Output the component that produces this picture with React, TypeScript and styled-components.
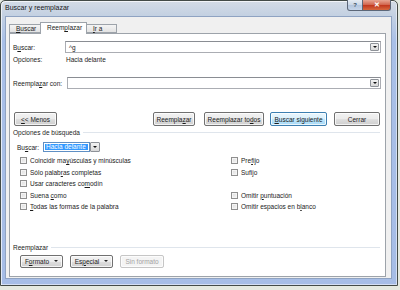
import React from "react";
import styled, { createGlobalStyle, css } from "styled-components";

const Global = createGlobalStyle`
  html, body { margin: 0; padding: 0; background: #e4e9e0; }
  body { font-family: "Liberation Sans", Arial, sans-serif; font-size: 6.5px; color: #1b1b1b; }
  * { box-sizing: border-box; }
  u { text-decoration: underline; text-underline-offset: 1px; }
`;

const Window = styled.div`
  width: 398px;
  height: 286px;
  border: 1px solid #434b47;
  border-radius: 5px 5px 0 0;
  background: linear-gradient(180deg, #d4dce6 0px, #c4d1e2 14px, #a9c0e8 40px, #a6bde6 100%);
  box-shadow: inset 1px 1px 0 rgba(255, 255, 255, 0.7), inset -1px -1px 0 rgba(255, 255, 255, 0.5);
  display: flex;
  flex-direction: column;
`;

const TitleBar = styled.div`
  height: 15px;
  display: flex;
  align-items: flex-start;
  justify-content: space-between;
  padding-left: 4px;
`;

const Title = styled.span`
  font-size: 7px;
  line-height: 13px;
  color: #1a1a1a;
`;

const Controls = styled.div`
  display: flex;
  margin-right: 6px;
  margin-top: -1px;
`;

const CtrlBtn = styled.div<{ $close?: boolean }>`
  height: 11px;
  width: ${(p) => (p.$close ? 28 : 16)}px;
  border: 1px solid #5c6778;
  border-top: none;
  ${(p) =>
    p.$close
      ? css`
          border-radius: 0 0 3px 0;
          background: linear-gradient(180deg, #e8a593 0%, #d0624a 50%, #c2391f 55%, #d6683f 100%);
          border-left: none;
          color: #fff;
        `
      : css`
          border-radius: 0 0 0 3px;
          background: linear-gradient(180deg, #e6ecf3 0%, #c9d6e6 50%, #b4c6de 55%, #c7d6ea 100%);
          color: #3b4a60;
        `}
  display: flex;
  align-items: center;
  justify-content: center;
  font-size: 7px;
  font-weight: bold;
`;

const Client = styled.div`
  flex: 1;
  margin: 0 5px 6px 4px;
  background: #f0f0f0;
  border: 1px solid #8fa3c2;
  padding: 5px 5px 1px 3px;
  display: flex;
  flex-direction: column;
`;

const Tabs = styled.div`
  display: flex;
  align-items: flex-end;
  height: 11px;
  position: relative;
  z-index: 1;
`;

const Tab = styled.div<{ $active?: boolean; $w: number }>`
  width: ${(p) => p.$w}px;
  height: ${(p) => (p.$active ? 12 : 9)}px;
  margin-bottom: ${(p) => (p.$active ? -1 : 0)}px;
  border: 1px solid #9da3aa;
  border-bottom: ${(p) => (p.$active ? "none" : "1px solid #9da3aa")};
  border-left: ${(p) => (p.$active ? "1px solid #9da3aa" : "1px solid #9da3aa")};
  background: ${(p) => (p.$active ? "#ffffff" : "linear-gradient(180deg, #f4f4f4, #e3e3e3)")};
  padding-left: ${(p) => (p.$active ? 6 : 6)}px;
  line-height: ${(p) => (p.$active ? 10 : 8)}px;
  & + & { margin-left: -1px; }
`;

const Panel = styled.div`
  flex: 1;
  background: #fff;
  border: 1px solid #9da3aa;
  padding: 7px 2px 0 3px;
  display: flex;
  flex-direction: column;
`;

const FieldRow = styled.div<{ $mt?: number }>`
  display: flex;
  align-items: center;
  margin-top: ${(p) => p.$mt ?? 0}px;
`;

const Label = styled.span<{ $w: number }>`
  width: ${(p) => p.$w}px;
  flex-shrink: 0;
`;

const Combo = styled.div<{ $h: number }>`
  flex: 1;
  height: ${(p) => p.$h}px;
  border: 1px solid #abadb3;
  border-top-color: #8a8d93;
  display: flex;
  align-items: center;
  justify-content: space-between;
  padding: 0 1px 0 3px;
  margin-right: 2px;
`;

const ArrowBtn = styled.div<{ $w?: number; $h?: number }>`
  width: ${(p) => p.$w ?? 9}px;
  height: ${(p) => p.$h ?? 8}px;
  border: 1px solid #8e9298;
  border-radius: 1px;
  background: linear-gradient(180deg, #f3f3f3, #d8d8d8);
  display: flex;
  align-items: center;
  justify-content: center;
  &::after {
    content: "";
    border-left: 2px solid transparent;
    border-right: 2px solid transparent;
    border-top: 2px solid #111;
  }
`;

const ButtonRow = styled.div<{ $mt: number }>`
  display: flex;
  align-items: center;
  margin-top: ${(p) => p.$mt}px;
  gap: 6px;
`;

const Button = styled.div<{ $w: number; $h?: number; $default?: boolean; $disabled?: boolean; $ml?: number }>`
  width: ${(p) => p.$w}px;
  height: ${(p) => p.$h ?? 14}px;
  margin-left: ${(p) => p.$ml ?? 0}px;
  border: 1px solid ${(p) => (p.$default ? "#3c7fb1" : p.$disabled ? "#c6c6c6" : "#707070")};
  border-radius: 2px;
  background: ${(p) =>
    p.$disabled
      ? "#f4f4f4"
      : p.$default
      ? "linear-gradient(180deg, #eaf6fd 0%, #d9f0fc 50%, #bee6fd 55%, #a7d9f5 100%)"
      : "linear-gradient(180deg, #f2f2f2 0%, #ebebeb 50%, #dddddd 55%, #cfcfcf 100%)"};
  box-shadow: inset 0 0 0 1px rgba(255, 255, 255, 0.75);
  color: ${(p) => (p.$disabled ? "#a3a3a3" : "#1b1b1b")};
  display: flex;
  align-items: center;
  justify-content: center;
  gap: 5px;
  white-space: nowrap;
`;

const Caret = styled.span`
  border-left: 2px solid transparent;
  border-right: 2px solid transparent;
  border-top: 2px solid #222;
`;

const Spacer = styled.div`
  flex: 1;
`;

const GroupHeader = styled.div<{ $mt: number }>`
  display: flex;
  align-items: center;
  gap: 3px;
  margin-top: ${(p) => p.$mt}px;
  margin-right: 3px;
  height: 8px;
  white-space: nowrap;
  &::after {
    content: "";
    flex: 1;
    height: 1px;
    background: #dfe5ec;
  }
`;

const SearchRow = styled.div`
  display: flex;
  align-items: center;
  margin: 6px 0 0 4px;
  height: 10px;
`;

const Select = styled.div`
  width: 47px;
  height: 10px;
  border: 1px solid #5f8fc4;
  padding: 1px;
  display: flex;
`;

const Selected = styled.span`
  flex: 1;
  background: #3399ff;
  color: #fff;
  line-height: 6px;
  padding-left: 1px;
`;

const Options = styled.div`
  display: grid;
  grid-template-columns: 211px 1fr;
  grid-auto-rows: 11.5px;
  margin: 3px 0 0 7px;
`;

const Check = styled.label<{ $row: number; $col: number }>`
  grid-row: ${(p) => p.$row};
  grid-column: ${(p) => p.$col};
  display: flex;
  align-items: center;
  gap: 3px;
  white-space: nowrap;
`;

const Box = styled.span`
  width: 7px;
  height: 7px;
  border: 1px solid #8f8f8f;
  background: linear-gradient(135deg, #dcdcdc, #f6f6f6);
  box-shadow: inset 0 0 0 1px #f4f4f4;
`;

const Help = () => <span style={{ fontSize: 6 }}>?</span>;

export default function App() {
  const left: [number, React.ReactNode][] = [
    [1, <>Coincidir ma<u>y</u>úsculas y minúsculas</>],
    [2, <>Sólo palab<u>r</u>as completas</>],
    [3, <>Usar caracteres co<u>m</u>odín</>],
    [4, <>Suena <u>c</u>omo</>],
    [5, <><u>T</u>odas las formas de la palabra</>],
  ];
  const right: [number, React.ReactNode][] = [
    [1, <>Pre<u>f</u>ijo</>],
    [2, <>Sufi<u>j</u>o</>],
    [4, <>Omitir <u>p</u>untuación</>],
    [5, <>Omitir espacios en b<u>l</u>anco</>],
  ];
  return (
    <>
      <Global />
      <Window>
        <TitleBar>
          <Title>Buscar y reemplazar</Title>
          <Controls>
            <CtrlBtn>
              <Help />
            </CtrlBtn>
            <CtrlBtn $close>✕</CtrlBtn>
          </Controls>
        </TitleBar>
        <Client>
          <Tabs>
            <Tab $w={32}>
              <u>B</u>uscar
            </Tab>
            <Tab $w={47} $active>
              Reem<u>p</u>lazar
            </Tab>
            <Tab $w={31}>
              <u>I</u>r a
            </Tab>
          </Tabs>
          <Panel>
            <FieldRow>
              <Label $w={52}>
                B<u>u</u>scar:
              </Label>
              <Combo $h={12}>
                <span>^g</span>
                <ArrowBtn />
              </Combo>
            </FieldRow>
            <FieldRow $mt={1} style={{ height: 10 }}>
              <Label $w={53}>Opciones:</Label>
              <span>Hacia delante</span>
            </FieldRow>
            <FieldRow $mt={13}>
              <Label $w={54}>
                Reempla<u>z</u>ar con:
              </Label>
              <Combo $h={12}>
                <span />
                <ArrowBtn />
              </Combo>
            </FieldRow>
            <ButtonRow $mt={23}>
              <Button $w={43} $ml={1}>
                <span>
                  <u>&lt;</u>&lt; Menos
                </span>
              </Button>
              <Spacer />
              <Button $w={42}>
                <span>
                  Reempla<u>z</u>ar
                </span>
              </Button>
              <Button $w={60} style={{ marginLeft: 3 }}>
                <span>
                  Reemplazar to<u>d</u>os
                </span>
              </Button>
              <Button $w={57} $default>
                <span>
                  <u>B</u>uscar siguiente
                </span>
              </Button>
              <Button $w={46} style={{ marginRight: 3, marginLeft: 1 }}>
                <span>Cerrar</span>
              </Button>
            </ButtonRow>
            <GroupHeader $mt={2}>Opciones de búsqueda</GroupHeader>
            <SearchRow>
              <Label $w={26}>
                Bu<u>s</u>car:
              </Label>
              <Select>
                <Selected>Hacia delante</Selected>
              </Select>
              <ArrowBtn $w={10} $h={10} />
            </SearchRow>
            <Options>
              {left.map(([r, t], i) => (
                <Check key={"l" + i} $row={r} $col={1}>
                  <Box />
                  <span>{t}</span>
                </Check>
              ))}
              {right.map(([r, t], i) => (
                <Check key={"r" + i} $row={r} $col={2}>
                  <Box />
                  <span>{t}</span>
                </Check>
              ))}
            </Options>
            <GroupHeader $mt={31}>Reemplazar</GroupHeader>
            <ButtonRow $mt={3} style={{ paddingLeft: 7, gap: 7 }}>
              <Button $w={43} $h={13}>
                <span>
                  F<u>o</u>rmato
                </span>
                <Caret />
              </Button>
              <Button $w={43} $h={13}>
                <span>
                  Es<u>p</u>ecial
                </span>
                <Caret />
              </Button>
              <Button $w={44} $h={13} $disabled>
                <span>Sin formato</span>
              </Button>
            </ButtonRow>
          </Panel>
        </Client>
      </Window>
    </>
  );
}
